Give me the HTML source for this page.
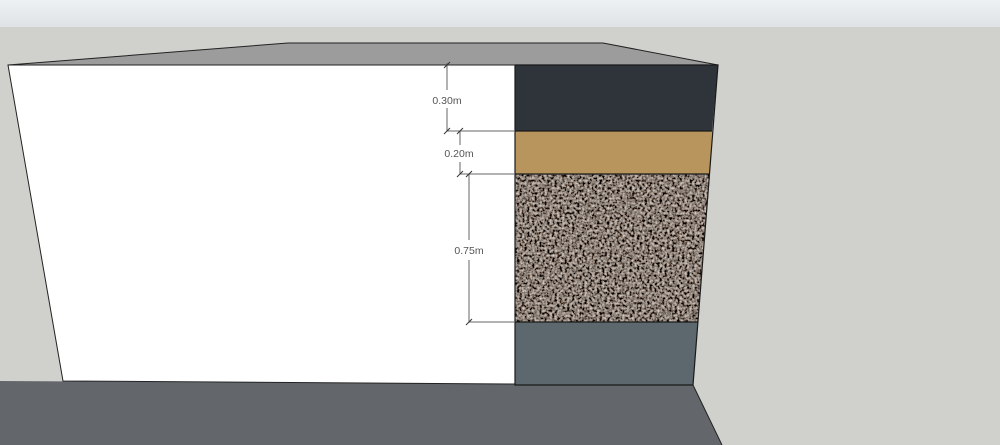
<!DOCTYPE html>
<html><head><style>
html,body{margin:0;padding:0;width:1000px;height:445px;overflow:hidden;background:#d0d0cc}
</style></head><body>
<svg width="1000" height="445" viewBox="0 0 1000 445" xmlns="http://www.w3.org/2000/svg">
<defs>
<linearGradient id="sky" x1="0" y1="0" x2="0" y2="1"><stop offset="0" stop-color="#eef1f3"/><stop offset="1" stop-color="#dfe3e6"/></linearGradient>
<clipPath id="gc"><polygon points="515,174 710,174 698,322 515,322"/></clipPath>
<filter id="grav" x="0" y="0" width="100%" height="100%">
<feTurbulence type="fractalNoise" baseFrequency="0.4" numOctaves="2" seed="3"/>
<feColorMatrix type="matrix" values="1.3 0 0 0 -0.4  1.2 0 0 0 -0.39  1.1 0 0 0 -0.37  0 0 0 0 1"/>
</filter>
</defs>
<rect x="0" y="0" width="1000" height="27" fill="url(#sky)"/>
<polygon points="0,381 693,385 722,445 0,445" fill="#63676b"/>
<line x1="693" y1="385" x2="722" y2="445" stroke="#222" stroke-width="1"/>
<polygon points="8,65 288,43 603,43 718,65" fill="#9c9c9c" stroke="#222" stroke-width="1"/>
<polygon points="8,65 515,65 515,384 63,381" fill="#fff" stroke="#222" stroke-width="1"/>
<polygon points="515,65 718,65 712,131 515,131" fill="#2f333a"/>
<polygon points="515,131 712,131 710,174 515,174" fill="#b8955c"/>
<g clip-path="url(#gc)">
<rect x="515" y="174" width="196" height="148" fill="#7d726a"/>
<rect x="515" y="174" width="196" height="148" filter="url(#grav)"/>
</g>
<polygon points="515,322 698,322 693,385 515,385" fill="#5c686d"/>
<g stroke="#1a1a1a" stroke-width="1.2" fill="none">
<polyline points="515,65 718,65 693,385 515,385 515,65"/>
<line x1="515" y1="131" x2="712" y2="131"/>
<line x1="515" y1="174" x2="710" y2="174"/>
<line x1="515" y1="322" x2="698" y2="322"/>
</g>
<g stroke="#666" stroke-width="1" fill="none">
<line x1="447" y1="63" x2="447" y2="90"/><line x1="447" y1="108" x2="447" y2="131"/>
<line x1="447" y1="131" x2="515" y2="131"/>
<line x1="460" y1="131" x2="460" y2="145"/><line x1="460" y1="162" x2="460" y2="174"/>
<line x1="460" y1="174" x2="515" y2="174"/>
<line x1="469" y1="174" x2="469" y2="240"/><line x1="469" y1="260" x2="469" y2="322"/>
<line x1="469" y1="322" x2="515" y2="322"/>
</g>
<g stroke="#333" stroke-width="1">
<line x1="444" y1="68" x2="450" y2="62"/>
<line x1="444" y1="134" x2="450" y2="128"/><line x1="457" y1="134" x2="463" y2="128"/>
<line x1="457" y1="177" x2="463" y2="171"/><line x1="466" y1="177" x2="472" y2="171"/>
<line x1="466" y1="325" x2="472" y2="319"/>
</g>
<g font-family="Liberation Sans, sans-serif" font-size="10.5" fill="#555" text-anchor="middle">
<text x="447" y="104">0.30m</text>
<text x="459" y="157">0.20m</text>
<text x="469" y="254">0.75m</text>
</g>
</svg>
</body></html>
